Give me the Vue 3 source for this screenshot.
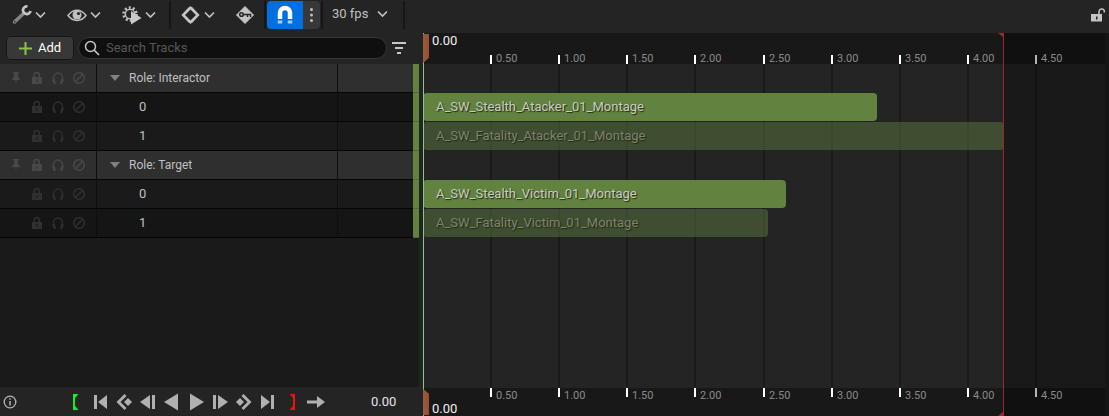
<script setup>
import { ref } from 'vue'

const PX_PER_SECOND = 136.2

const search = ref('')
const fps = ref('30 fps')
const endTime = 4.262

const groups = [
  {
    name: 'Role: Interactor',
    rows: [
      { label: '0', clip: 'A_SW_Stealth_Atacker_01_Montage', length: 3.333, active: true, shade: 'dark' },
      { label: '1', clip: 'A_SW_Fatality_Atacker_01_Montage', length: 4.266, active: false, shade: 'light' }
    ]
  },
  {
    name: 'Role: Target',
    rows: [
      { label: '0', clip: 'A_SW_Stealth_Victim_01_Montage', length: 2.666, active: true, shade: 'light' },
      { label: '1', clip: 'A_SW_Fatality_Victim_01_Montage', length: 2.533, active: false, shade: 'dark' }
    ]
  }
]

const px = (seconds) => Math.round(seconds * PX_PER_SECOND) + 'px'
const tickLeft = (seconds) => Math.round(seconds * PX_PER_SECOND - 1) + 'px'
const ticks = [0.5, 1, 1.5, 2, 2.5, 3, 3.5, 4, 4.5]

const transport = [
  { name: 'Set playback start', fill: '#14f028', d: 'M9 4h5.500l-3.500 4v8l3.500 4h-5.500z' },
  { name: 'Go to front', d: 'M6 5h3v14h-3zM19 5v14l-9-7z' },
  { name: 'Previous key', d: 'M12.500 4l2 2l-6 6l6 6l-2 2l-8-8zM16 8l4 4l-4 4l-4-4z' },
  { name: 'Step back', d: 'M14 5v14l-10-7zM16 5h3v14h-3z' },
  { name: 'Play reverse', d: 'M18 3.500v17l-14-8.500z' },
  { name: 'Play', d: 'M6 3.500v17l14-8.500z' },
  { name: 'Step forward', d: 'M5 5h3v14h-3zM10 5v14l10-7z' },
  { name: 'Next key', d: 'M11.500 4l-2 2l6 6l-6 6l2 2l8-8zM8 8l-4 4l4 4l4-4z' },
  { name: 'Go to end', d: 'M5 5v14l9-7zM15 5h3v14h-3z' },
  { name: 'Set playback end', fill: '#f01010', d: 'M15 4h-5.500l3.500 4v8l-3.500 4h5.500z' },
  { name: 'Playback mode', d: 'M3 10.500h10v-4.500l8 6l-8 6v-4.500h-10z' }
]
</script>

<template>
  <div class="sequencer">
    <header class="toolbar">
      <button class="tool menu" aria-label="Actions">
        <svg width="20" height="20" viewBox="0 0 20 20"><path d="M2.500 17L11 9" stroke="#858585" stroke-width="3.500" stroke-linecap="round" /><circle cx="2.800" cy="16.800" r=".8" fill="#242424" /><path d="M15.500 1.500a3.800 3.800 0 1 0 3 4.500" fill="none" stroke="#c4c4c4" stroke-width="2.800" /></svg>
        <svg class="chev" width="11" height="8" viewBox="0 0 11 8"><path d="M1 1.500l4.500 4.500l4.500-4.500" /></svg>
      </button>
      <button class="tool menu" aria-label="View options">
        <svg width="20" height="20" viewBox="0 0 20 20"><path d="M1 10.500c5-7 13-7 18 0c-5 6.500-13 6.500-18 0z" fill="none" stroke="#c0c0c0" stroke-width="1.500" /><circle cx="10" cy="10" r="4.500" fill="#c0c0c0" /><circle cx="11.500" cy="8.500" r="1.600" fill="#242424" /></svg>
        <svg class="chev" width="11" height="8" viewBox="0 0 11 8"><path d="M1 1.500l4.500 4.500l4.500-4.500" /></svg>
      </button>
      <button class="tool menu" aria-label="Playback options">
        <svg width="20" height="20" viewBox="0 0 20 20"><circle cx="8" cy="9" r="6.500" fill="none" stroke="#c0c0c0" stroke-width="2.500" stroke-dasharray="2 2.080" /><circle cx="8" cy="9" r="4.700" fill="none" stroke="#c0c0c0" stroke-width="1.500" /><path d="M9 6v13.500l10.500-6.500z" fill="#c8c8c8" /></svg>
        <svg class="chev" width="11" height="8" viewBox="0 0 11 8"><path d="M1 1.500l4.500 4.500l4.500-4.500" /></svg>
      </button>
      <i class="divider"></i>
      <button class="tool menu" aria-label="Key options">
        <svg width="20" height="20" viewBox="0 0 20 20"><path d="M7.500 2h4l7 8l-7 8h-4l-7-8z" fill="#777" /><path d="M9.500 1l9 9l-9 9l-9-9z" fill="#c8c8c8" /><path d="M9.500 4.500l5.500 5.500l-5.500 5.500l-5.500-5.500z" fill="#242424" /></svg>
        <svg class="chev" width="11" height="8" viewBox="0 0 11 8"><path d="M1 1.500l4.500 4.500l4.500-4.500" /></svg>
      </button>
      <button class="tool key" aria-label="Auto key">
        <svg width="20" height="20" viewBox="0 0 20 20"><path d="M10 1.500l8.500 8.500l-8.500 8.500l-8.500-8.500z" fill="#c4c4c4" stroke="#c4c4c4" stroke-linejoin="round" /><circle cx="6.500" cy="9.500" r="1.800" fill="none" stroke="#242424" stroke-width="1.500" /><path d="M8.500 9.500h7v2.500M12.500 9.500v2.500" fill="none" stroke="#242424" stroke-width="1.500" /></svg>
      </button>
      <i class="divider"></i>
      <button class="snap" aria-label="Snapping" aria-pressed="true">
        <svg width="16" height="20" viewBox="0 0 16 20"><path d="M3 14V8a5 5 0 0 1 10 0v6" fill="none" stroke="#fff" stroke-width="4.500" /><path d="M.75 15.500h4.500v3h-4.500zM10.750 15.500h4.500v3h-4.500z" fill="#a9cdf5" /></svg>
      </button>
      <button class="snap-more" aria-label="Snapping options">
        <svg width="5" height="16" viewBox="0 0 5 16" fill="#c0c0c0"><circle cx="2.500" cy="2.500" r="1.500" /><circle cx="2.500" cy="8" r="1.500" /><circle cx="2.500" cy="13.500" r="1.500" /></svg>
      </button>
      <i class="divider"></i>
      <label class="fps">
        <select v-model="fps" aria-label="Frame rate"><option>30 fps</option></select>
        <svg class="chev" width="11" height="8" viewBox="0 0 11 8"><path d="M1 1.500l4.500 4.500l4.500-4.500" /></svg>
      </label>
      <i class="divider"></i>
      <button class="tool lock" aria-label="Lock sequence">
        <svg width="14" height="16" viewBox="0 0 14 16"><path d="M8 8V4.500a2.800 2.800 0 0 1 5.300-1v2" fill="none" stroke="#c4c4c4" stroke-width="1.500" /><path d="M0 7h11v7.500h-11z" fill="#c4c4c4" /><path d="M5 9.500h1.500v3h-1.500z" fill="#242424" /></svg>
      </button>
    </header>

    <main class="body">
      <section class="outliner">
        <div class="filterbar">
          <button class="add">
            <svg width="13" height="13" viewBox="0 0 13 13"><path d="M6.500 0v13M0 6.500h13" stroke="#8bc24a" stroke-width="2" /></svg>
            Add
          </button>
          <label class="search">
            <svg width="18" height="18" viewBox="0 0 18 18"><circle cx="7.500" cy="7.500" r="5" fill="none" stroke="#c4c4c4" stroke-width="1.500" /><path d="M11 11l5 5" stroke="#c4c4c4" stroke-width="1.700" /></svg>
            <input v-model="search" type="text" placeholder="Search Tracks" aria-label="Search Tracks" />
          </label>
          <button class="filter" aria-label="Filter">
            <svg width="14" height="12" viewBox="0 0 14 12"><path d="M0 1h14M3 6h8M5 11h4" stroke="#c8c8c8" stroke-width="2" /></svg>
          </button>
        </div>

        <div class="tracks">
          <template v-for="group in groups" :key="group.name">
            <div v-for="(row, i) in [null, ...group.rows]" :key="i" class="row" :class="row ? row.shade : 'group'">
              <div class="flags">
                <button v-if="!row" aria-label="Pin"><svg width="14" height="14" viewBox="0 0 14 14"><path d="M4 1h6v1.500h-1v3.500l2 2v1h-3.300l-.7 4l-.7-4h-3.300v-1l2-2v-3.500h-1z" fill="currentColor" /></svg></button>
                <span v-else></span>
                <button aria-label="Lock"><svg width="14" height="14" viewBox="0 0 14 14"><path d="M4.200 6.500v-2.500a2.500 2.500 0 0 1 5 0v2.500" fill="none" stroke="currentColor" stroke-width="1.500" /><path fill-rule="evenodd" d="M2 6h10v7h-10zM6.500 8v3h1v-3z" fill="currentColor" /></svg></button>
                <button aria-label="Solo"><svg width="14" height="14" viewBox="0 0 14 14"><path d="M2.500 10v-3a4.500 5 0 0 1 9 0v3" fill="none" stroke="currentColor" stroke-width="1.400" /><path d="M1 8.500l2.500-.5l1.500 4.500l-2 .7zM13 8.500l-2.500-.5l-1.500 4.500l2 .7z" fill="currentColor" /></svg></button>
                <button aria-label="Mute"><svg width="14" height="14" viewBox="0 0 14 14"><circle cx="7" cy="7" r="5.300" fill="none" stroke="currentColor" stroke-width="1.500" /><path d="M3.500 10.500l7-7" stroke="currentColor" stroke-width="1.500" /></svg></button>
              </div>
              <div class="name">
                <button v-if="!row" class="twirl" aria-label="Collapse"><svg width="12" height="8" viewBox="0 0 12 8"><path d="M1 1h10l-5 6z" fill="#808080" /></svg></button>
                <span v-else class="indent"></span>
                {{ row ? row.label : group.name }}
              </div>
              <div class="edit"></div>
              <div class="tint"></div>
            </div>
          </template>
        </div>

        <footer class="transport">
          <button class="info" aria-label="Info"><svg width="14" height="14" viewBox="0 0 14 14"><circle cx="7" cy="7" r="5.800" fill="none" stroke="#b4b4b4" stroke-width="1.300" /><path d="M7 6v4.500M7 3.300v1.500" stroke="#b4b4b4" stroke-width="1.500" /></svg></button>
          <button v-for="t in transport" :key="t.name" :aria-label="t.name">
            <svg width="24" height="24" viewBox="0 0 24 24"><path :d="t.d" :fill="t.fill || '#b0b0b0'" /></svg>
          </button>
          <output class="time">0.00</output>
        </footer>
      </section>

      <div class="splitter"></div>

      <section class="timeline">
        <div class="ruler top">
          <div v-for="t in ticks" :key="t" class="tick" :class="{ out: t > endTime }" :style="{ left: tickLeft(t) }">{{ t.toFixed(2) }}</div>
          <span class="current">0.00</span>
        </div>
        <div class="canvas">
          <i v-for="t in ticks" :key="t" class="gridline" :style="{ left: tickLeft(t) }"></i>
          <div class="lanes">
            <template v-for="group in groups" :key="group.name">
              <div class="lane"></div>
              <div v-for="row in group.rows" :key="row.clip" class="lane">
                <div class="clip" :class="{ inactive: !row.active }" :style="{ width: px(row.length) }">{{ row.clip }}</div>
              </div>
            </template>
          </div>
        </div>
        <div class="ruler bottom">
          <div v-for="t in ticks" :key="t" class="tick" :class="{ out: t > endTime }" :style="{ left: tickLeft(t) }">{{ t.toFixed(2) }}</div>
          <span class="current">0.00</span>
        </div>
        <div class="outside" :style="{ left: px(endTime) }">
          <i class="corner upper"></i>
          <i class="corner lower"></i>
        </div>
        <div class="playhead"><i class="cap upper"></i><i class="cap lower"></i></div>
      </section>
      <div class="edge"></div>
    </main>
  </div>
</template>

<style>
body {
  background: #1a1a1a;
}
</style>

<style scoped>
* {
  box-sizing: border-box;
}
.sequencer {
  display: flex;
  flex-direction: column;
  min-height: 100vh;
  background: #1a1a1a;
  color: #c0c0c0;
  font: 13px/16px Roboto, "Liberation Sans", sans-serif;
}
button,
select,
input {
  margin: 0;
  padding: 0;
  border: 0;
  background: none;
  color: inherit;
  font: inherit;
}
button {
  display: flex;
  align-items: center;
  justify-content: center;
}
svg {
  display: block;
  flex: none;
}
.toolbar {
  display: flex;
  height: 33px;
  padding: 1px 4px 4px 3px;
  background: #242424;
}
.chev path {
  fill: none;
  stroke: #c0c0c0;
  stroke-width: 1.7;
}
.tool.menu {
  gap: 3px;
  width: 55px;
  padding-left: 9px;
  justify-content: flex-start;
}
.tool.key {
  width: 36px;
}
.tool.lock {
  margin-left: auto;
}
.divider {
  width: 2px;
  margin: 0 1px;
  background: #161616;
}
.snap {
  width: 36px;
  border-radius: 4px 0 0 4px;
  background: #0070e0;
}
.snap-more {
  width: 17px;
  border-radius: 0 4px 4px 0;
  background: #383838;
}
.fps {
  display: flex;
  align-items: center;
  gap: 8px;
  padding: 0 14px 2px 8px;
}
.fps select {
  appearance: none;
}
.body {
  display: flex;
  flex: 1;
}
.outliner {
  display: flex;
  flex-direction: column;
  width: 419px;
}
.filterbar {
  display: flex;
  align-items: center;
  height: 31px;
  padding: 0 13px 1px 6px;
  background: #242424;
}
.add {
  gap: 6px;
  width: 68px;
  height: 24px;
  margin-right: 4px;
  border: 1px solid #161616;
  border-radius: 4px;
  background: #383838;
  color: #fff;
}
.search {
  display: flex;
  flex: 1;
  align-items: center;
  gap: 5px;
  height: 22px;
  padding: 0 4px;
  border: 1px solid #363636;
  border-radius: 11px;
  background: #0f0f0f;
}
.search input {
  flex: 1;
  min-width: 0;
  outline: none;
}
.search input::placeholder {
  color: #575757;
  opacity: 1;
}
.filter {
  margin-left: 5px;
}
.tracks {
  flex: 1;
}
.row {
  display: grid;
  grid-template-columns: 97px 1fr 75px 6px;
  height: 29px;
  color: #c0c0c0;
}
.row > div {
  border-bottom: 1px solid #050505;
}
.row.group {
  background: #2f2f2f;
  font-size: 12px;
}
.row.dark {
  background: #151515;
}
.row.light {
  background: #1a1a1a;
}
.flags {
  display: grid;
  grid-template-columns: repeat(4, 21px);
  padding-left: 5px;
  color: #303030;
}
.flags,
.name {
  border-right: 1px solid #0e0e0e;
}
.group .flags {
  color: #484848;
}
.name {
  display: flex;
  align-items: center;
}
.twirl {
  width: 12px;
  margin: 0 8px 0 12px;
}
.indent {
  width: 42px;
}
.row > .tint {
  border-color: #4f6a37;
  background: #628240;
}
.transport {
  display: flex;
  align-items: center;
  height: 29px;
  background: #242424;
}
.info {
  margin: 0 47px 0 3px;
}
.time {
  margin-left: 43px;
  color: #e4e4e4;
}
.splitter {
  width: 4px;
  background: linear-gradient(#242424 31px, #1f261e 31px, #1f261e calc(100% - 29px), #242424 calc(100% - 29px));
}
.timeline {
  position: relative;
  display: flex;
  flex: 1;
  flex-direction: column;
  overflow: hidden;
}
.ruler {
  position: relative;
  background: #181818;
}
.ruler.top {
  height: 31px;
}
.ruler.bottom {
  height: 29px;
  border-top: 1px solid #242424;
}
.tick {
  position: absolute;
  z-index: 2;
  height: 9px;
  padding-left: 4px;
  border-left: 2px solid #fff;
  color: #8a8a8a;
  font-size: 11px;
  line-height: 8px;
}
.top .tick {
  bottom: 0;
}
.bottom .tick {
  top: 0;
  line-height: 15px;
}
.tick.out {
  border-color: #b4b4b4;
}
.current {
  position: absolute;
  left: 9px;
  color: #f0f0f0;
}
.top .current {
  top: 0;
}
.bottom .current {
  bottom: 0;
  line-height: 14px;
}
.canvas {
  position: relative;
  flex: 1;
  background: #242424;
}
.gridline {
  position: absolute;
  top: 0;
  bottom: 0;
  width: 2px;
  background: #1a1a1a;
}
.lanes {
  position: relative;
}
.lane {
  height: 29px;
}
.clip {
  height: 28px;
  padding-left: 13px;
  border-radius: 4px;
  background: #628240;
  color: #c8ccc2;
  line-height: 28px;
  text-shadow: 1px 1px 1px #20280f;
  white-space: nowrap;
}
.clip.inactive {
  background: rgba(98, 130, 64, 0.45);
  color: #7b8470;
}
.outside {
  position: absolute;
  top: 0;
  right: 0;
  bottom: 0;
  border-left: 1px solid #9a282c;
  background: rgba(0, 0, 0, 0.3);
}
.corner {
  position: absolute;
  left: -6px;
  width: 6px;
  height: 5px;
  background: #9a282c;
}
.corner.upper {
  top: 0;
  clip-path: polygon(0 0, 100% 0, 100% 100%);
}
.corner.lower {
  bottom: 0;
  clip-path: polygon(100% 0, 100% 100%, 0 100%);
}
.playhead {
  position: absolute;
  top: 0;
  bottom: 0;
  left: 0;
  width: 1px;
  background: #94bd98;
}
.cap {
  position: absolute;
  left: 0;
  width: 6px;
  background: linear-gradient(90deg, #94603e, #a04a32);
}
.cap.upper {
  top: 1px;
  height: 29px;
  clip-path: polygon(0 0, 100% 0, 100% 82%, 0 100%);
}
.cap.lower {
  bottom: 1px;
  height: 26px;
  clip-path: polygon(0 0, 100% 18%, 100% 100%, 0 100%);
}
.edge {
  width: 4px;
  background: #151515;
}
</style>
